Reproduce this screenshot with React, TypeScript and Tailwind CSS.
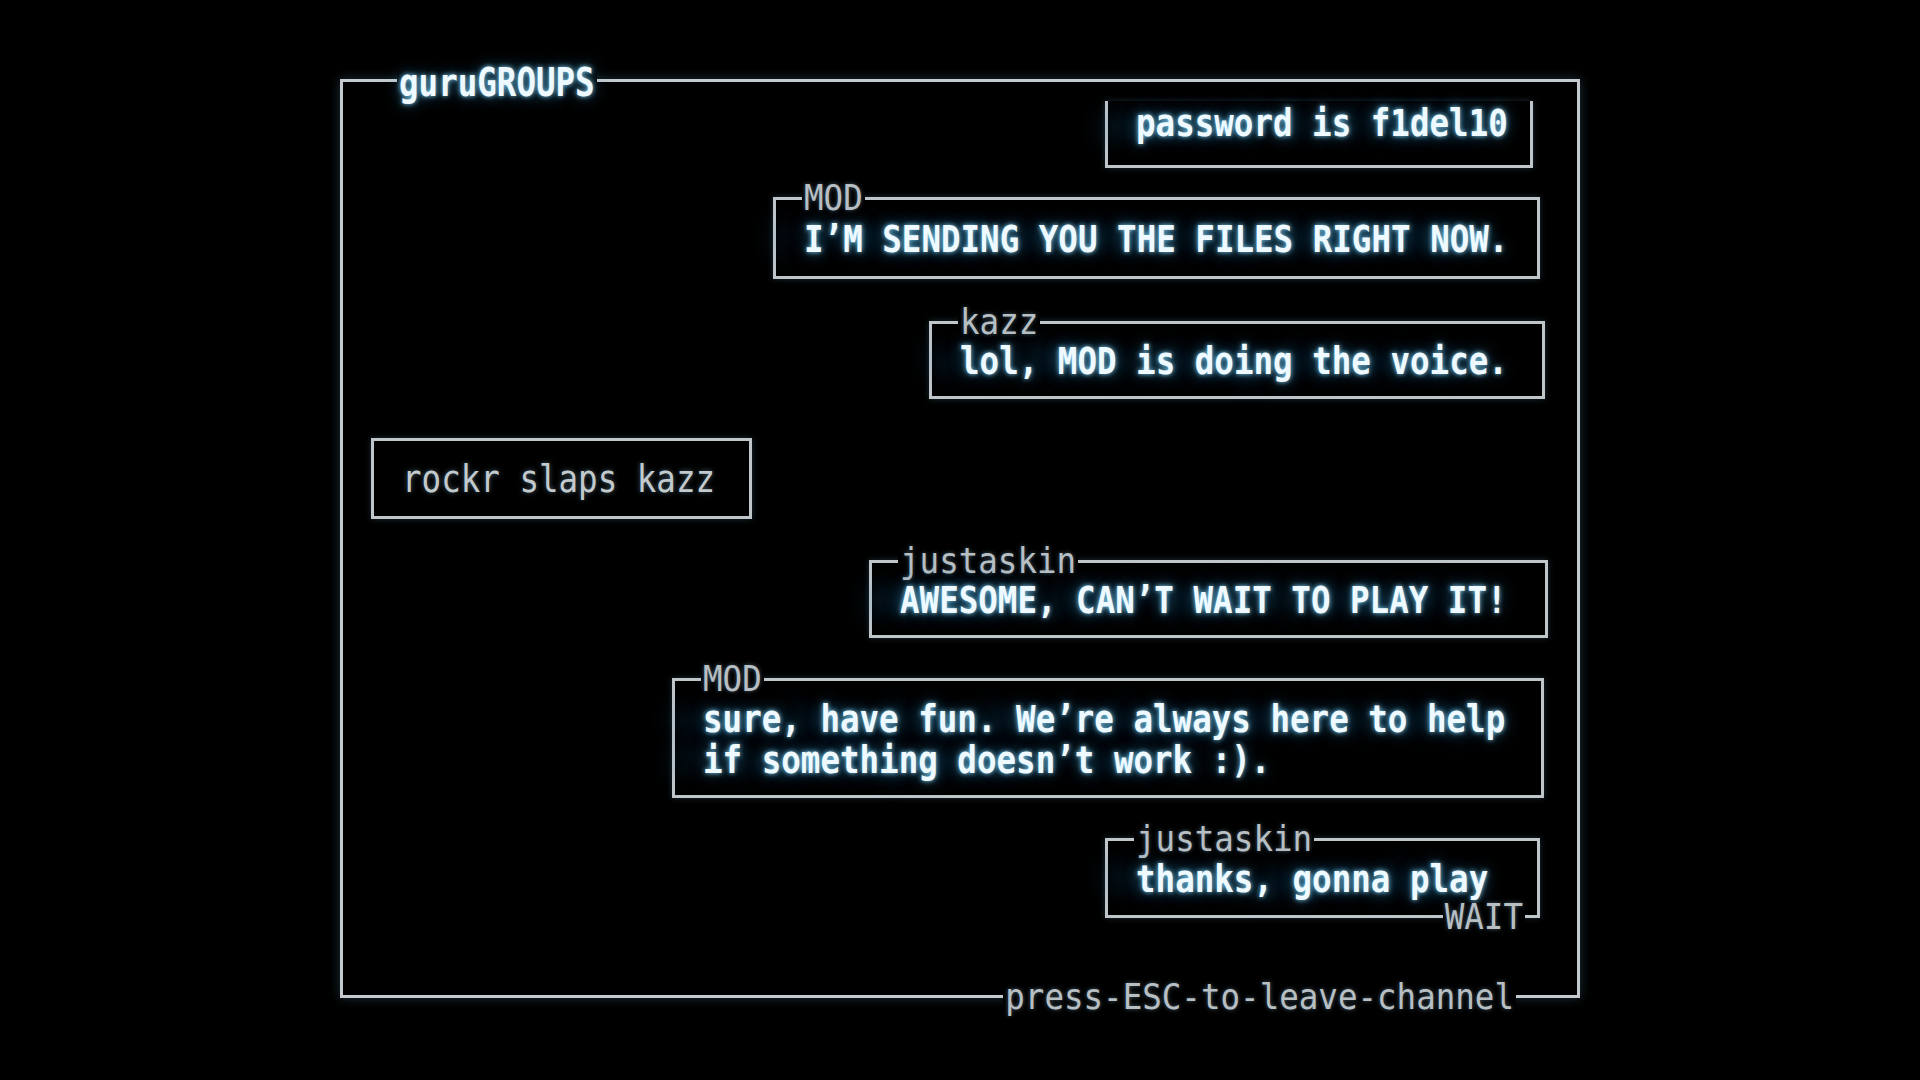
import React from "react";

const msgCls =
  "inline-block scale-y-[1.12] font-bold text-[#eefaff] whitespace-pre [text-shadow:0_0_5px_rgba(140,220,255,0.95),0_0_14px_rgba(60,170,230,0.6),-34px_0_22px_rgba(40,130,190,0.35)]";
const lblCls =
  "absolute bg-black px-[2px] leading-[26px] font-normal text-[#b7bfc3] whitespace-pre scale-y-[1.08] [text-shadow:0_0_4px_rgba(150,200,230,0.45)]";
const boxCls =
  "relative border-[#bfc6ca] shadow-[0_0_6px_rgba(140,200,235,0.22)] flex items-center pl-[28px] leading-[34px]";

function TopLabel({ children }: { children: React.ReactNode }) {
  return <span className={`${lblCls} left-[26px] top-[-2.5px] -translate-y-1/2`}>{children}</span>;
}

export default function App() {
  return (
    <div className="w-[1920px] h-[1080px] bg-black overflow-hidden pt-[79px] pl-[340px] font-['DejaVu_Sans_Mono','Liberation_Mono',monospace] text-[32.5px] leading-[40px]">
      <div className="relative w-[1240px] h-[919px] border-[3px] border-[#c3cacd] shadow-[0_0_10px_rgba(120,190,230,0.25)] flex flex-col items-end">
        <span className="absolute left-[54px] top-[1px] -translate-y-1/2 scale-y-[1.18] bg-black px-[2px] leading-[30px] font-bold text-[#eefaff] [text-shadow:0_0_5px_rgba(140,220,255,0.95),0_0_14px_rgba(60,170,230,0.6)]">
          guruGROUPS
        </span>

        {/* box 1 (top scrolled off) */}
        <div className={`${boxCls} mt-[19px] mr-[44px] w-[428px] h-[67px] border-x-[3px] border-b-[3px] items-start pt-[6px] pl-[26px]`}>
          <span className={msgCls}>password is f1del10</span>
        </div>

        {/* box 2 */}
        <div className={`${boxCls} mt-[29px] mr-[37px] w-[767px] h-[82px] border-[3px] pt-[4px]`}>
          <TopLabel>MOD</TopLabel>
          <span className={msgCls}>I’M SENDING YOU THE FILES RIGHT NOW.</span>
        </div>

        {/* box 3 */}
        <div className={`${boxCls} mt-[42px] mr-[32px] w-[616px] h-[78px] border-[3px] pt-[4px]`}>
          <TopLabel>kazz</TopLabel>
          <span className={msgCls}>lol, MOD is doing the voice.</span>
        </div>

        {/* box 4 */}
        <div className={`${boxCls} self-start mt-[39px] ml-[28px] w-[381px] h-[81px] border-[3px] pt-[3px]`}>
          <span className="inline-block scale-y-[1.12] text-[#c3cacd] whitespace-pre [text-shadow:0_0_5px_rgba(150,205,235,0.45)]">rockr slaps kazz</span>
        </div>

        {/* box 5 */}
        <div className={`${boxCls} mt-[41px] mr-[29px] w-[679px] h-[78px] border-[3px] pt-[4px]`}>
          <TopLabel>justaskin</TopLabel>
          <span className={msgCls}>AWESOME, CAN’T WAIT TO PLAY IT!</span>
        </div>

        {/* box 6 */}
        <div className={`${boxCls} mt-[40px] mr-[33px] w-[872px] h-[120px] border-[3px] pt-[4px]`}>
          <TopLabel>MOD</TopLabel>
          <div className="flex flex-col items-start gap-[7px] leading-[34px]">
            <span className={msgCls}>sure, have fun. We’re always here to help</span>
            <span className={msgCls}>if something doesn’t work :).</span>
          </div>
        </div>

        {/* box 7 */}
        <div className={`${boxCls} mt-[40px] mr-[37px] w-[435px] h-[80px] border-[3px] pt-[4px]`}>
          <TopLabel>justaskin</TopLabel>
          <span className={msgCls}>thanks, gonna play</span>
          <span className={`${lblCls} right-[12px] bottom-[-1.5px] translate-y-1/2`}>WAIT</span>
        </div>

        <span className={`${lblCls} right-[61px] bottom-[-1.5px] translate-y-1/2`}>press-ESC-to-leave-channel</span>
      </div>
    </div>
  );
}
